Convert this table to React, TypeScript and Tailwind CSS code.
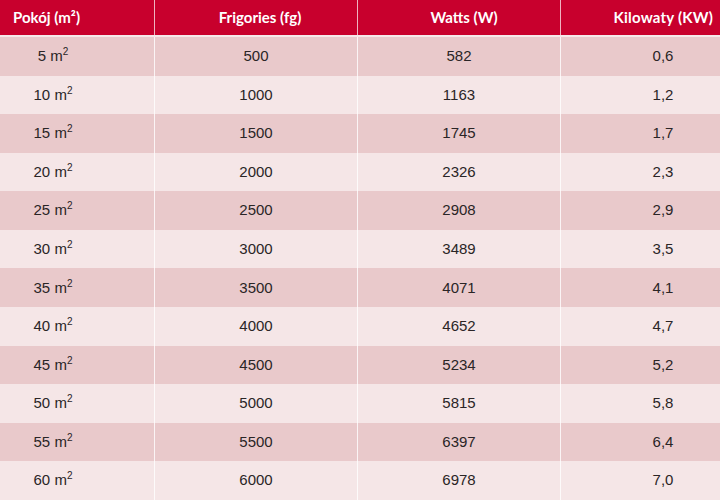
const rows = [
  ['5', '500', '582', '0,6'],
  ['10', '1000', '1163', '1,2'],
  ['15', '1500', '1745', '1,7'],
  ['20', '2000', '2326', '2,3'],
  ['25', '2500', '2908', '2,9'],
  ['30', '3000', '3489', '3,5'],
  ['35', '3500', '4071', '4,1'],
  ['40', '4000', '4652', '4,7'],
  ['45', '4500', '5234', '5,2'],
  ['50', '5000', '5815', '5,8'],
  ['55', '5500', '6397', '6,4'],
  ['60', '6000', '6978', '7,0'],
];

const cols = 'grid grid-cols-[155px_203px_203px_159px]';

export default function App() {
  return (
    <div className="w-[720px] h-[500px] flex flex-col bg-white overflow-hidden">
      <div
        className={`${cols} h-[35px] shrink-0 bg-[#c8002d] text-white font-bold text-[15px] font-['Lato','Open_Sans',sans-serif]`}
      >
        <div className="flex items-center pl-[13px] border-r border-white/70">Pokój (m²)</div>
        <div className="flex items-center justify-center pl-[8px] border-r border-white/70">Frigories (fg)</div>
        <div className="flex items-center justify-center pl-[10px] border-r border-white/70">Watts (W)</div>
        <div className="flex items-center justify-end pr-[7px] tracking-[0.2px]">Kilowaty (KW)</div>
      </div>
      <div className="h-[2px] shrink-0 bg-[#f6e9ea]" />
      <div className="flex-1 flex flex-col font-['Liberation_Sans',Arial,sans-serif] text-[15px] text-[#2a2526]">
        {rows.map((r, i) => (
          <div
            key={r[0]}
            className={`${cols} flex-1 ${i % 2 === 0 ? 'bg-[#e9c9cb]' : 'bg-[#f5e6e7]'}`}
          >
            <div className="flex items-center justify-center pr-[48px] border-r border-white/80">
              <span>
                {r[0]} m<sup className="text-[10px] top-[-6px]">2</sup>
              </span>
            </div>
            <div className="flex items-center justify-center border-r border-white/80">{r[1]}</div>
            <div className="flex items-center justify-center border-r border-white/80">{r[2]}</div>
            <div className="flex items-center justify-center pl-[45px]">{r[3]}</div>
          </div>
        ))}
      </div>
    </div>
  );
}
